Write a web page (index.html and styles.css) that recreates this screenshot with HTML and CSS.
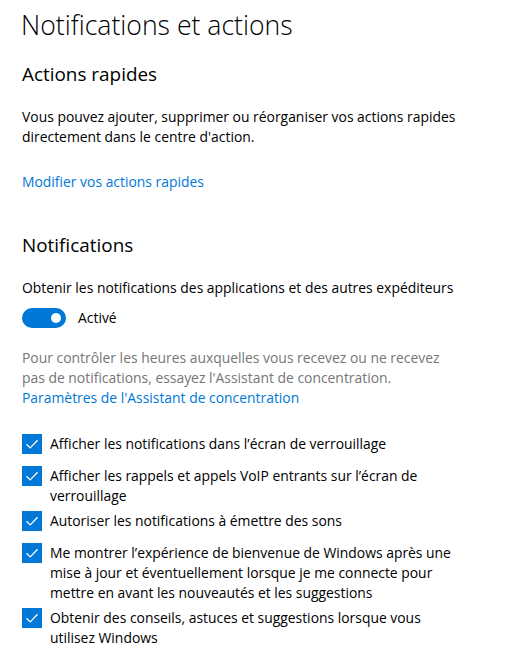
FILE: index.html
```html
<!DOCTYPE html>
<html lang="fr">
<head>
  <meta charset="UTF-8" />
  <meta name="viewport" content="width=device-width, initial-scale=1.0" />
  <title>Notifications et actions</title>
  <link rel="stylesheet" href="styles.css">
</head>
<body>
  <!-- Page title -->
  <h1 class="page-title">Notifications et actions</h1>

  <!-- Quick actions -->
  <section class="quick-actions">
    <h2>Actions rapides</h2>
    <p class="desc">Vous pouvez ajouter, supprimer ou réorganiser vos actions rapides<br>directement dans le centre d'action.</p>
    <a href="#" class="link">Modifier vos actions rapides</a>
  </section>

  <!-- Notifications -->
  <section class="notifications">
    <h2>Notifications</h2>
    <div class="toggle-label">Obtenir les notifications des applications et des autres expéditeurs</div>
    <div class="toggle-row">
      <span class="toggle"><span class="knob"></span></span>
      <span>Activé</span>
    </div>

    <p class="hint">Pour contrôler les heures auxquelles vous recevez ou ne recevez<br>pas de notifications, essayez l'Assistant de concentration.</p>
    <a href="#" class="link">Paramètres de l'Assistant de concentration</a>

    <ul class="checks">
      <li>
        <span class="box"><svg viewBox="0 0 20 20"><path d="M4.5 10.2 L8.2 13.9 L15.6 6.3" /></svg></span>
        <span>Afficher les notifications dans l’écran de verrouillage</span>
      </li>
      <li>
        <span class="box"><svg viewBox="0 0 20 20"><path d="M4.5 10.2 L8.2 13.9 L15.6 6.3" /></svg></span>
        <span>Afficher les rappels et appels VoIP entrants sur l’écran de<br>verrouillage</span>
      </li>
      <li>
        <span class="box"><svg viewBox="0 0 20 20"><path d="M4.5 10.2 L8.2 13.9 L15.6 6.3" /></svg></span>
        <span>Autoriser les notifications à émettre des sons</span>
      </li>
      <li>
        <span class="box"><svg viewBox="0 0 20 20"><path d="M4.5 10.2 L8.2 13.9 L15.6 6.3" /></svg></span>
        <span>Me montrer l’expérience de bienvenue de Windows après une<br>mise à jour et éventuellement lorsque je me connecte pour<br>mettre en avant les nouveautés et les suggestions</span>
      </li>
      <li>
        <span class="box"><svg viewBox="0 0 20 20"><path d="M4.5 10.2 L8.2 13.9 L15.6 6.3" /></svg></span>
        <span>Obtenir des conseils, astuces et suggestions lorsque vous<br>utilisez Windows</span>
      </li>
    </ul>
  </section>
</body>
</html>
```
FILE: styles.css
```css
body {
  font-family: "Open Sans", "Noto Sans", sans-serif;
  font-size: 13.9px;
  line-height: 20px;
  color: #000;
  background: #fff;
  margin: 0;
  padding: 7px 22px 0;
  white-space: nowrap;
}
.page-title {
  font-size: 26.6px;
  font-weight: 300;
  line-height: 36px;
  margin: 0 0 17px -1px;
}
h2 {
  font-size: 18.9px;
  font-weight: 400;
  line-height: 28px;
  margin: 0 0 19px;
}
.desc { margin: 0 0 25px; }
.link {
  display: block;
  color: #0078d7;
  text-decoration: none;
}
.quick-actions { margin-bottom: 39px; }
.toggle-label { margin-bottom: 10px; }
.toggle-row {
  display: flex;
  align-items: center;
  gap: 12px;
  margin-bottom: 20px;
}
.toggle {
  width: 44px;
  height: 20px;
  border-radius: 10px;
  background: #0078d7;
  display: flex;
  align-items: center;
  justify-content: flex-end;
  padding-right: 5px;
  box-sizing: border-box;
}
.knob {
  width: 10px;
  height: 10px;
  border-radius: 50%;
  background: #fff;
}
.hint {
  margin: 0;
  color: #767676;
}
.checks {
  list-style: none;
  margin: 26px 0 0;
  padding: 0;
}
.checks li {
  display: flex;
  gap: 8px;
  min-height: 32px;
  padding-bottom: 5px;
  box-sizing: border-box;
}
.box {
  flex: none;
  width: 20px;
  height: 20px;
  background: #0078d7;
}
.box svg {
  display: block;
  width: 20px;
  height: 20px;
  fill: none;
  stroke: #fff;
  stroke-width: 1.3;
}
```
